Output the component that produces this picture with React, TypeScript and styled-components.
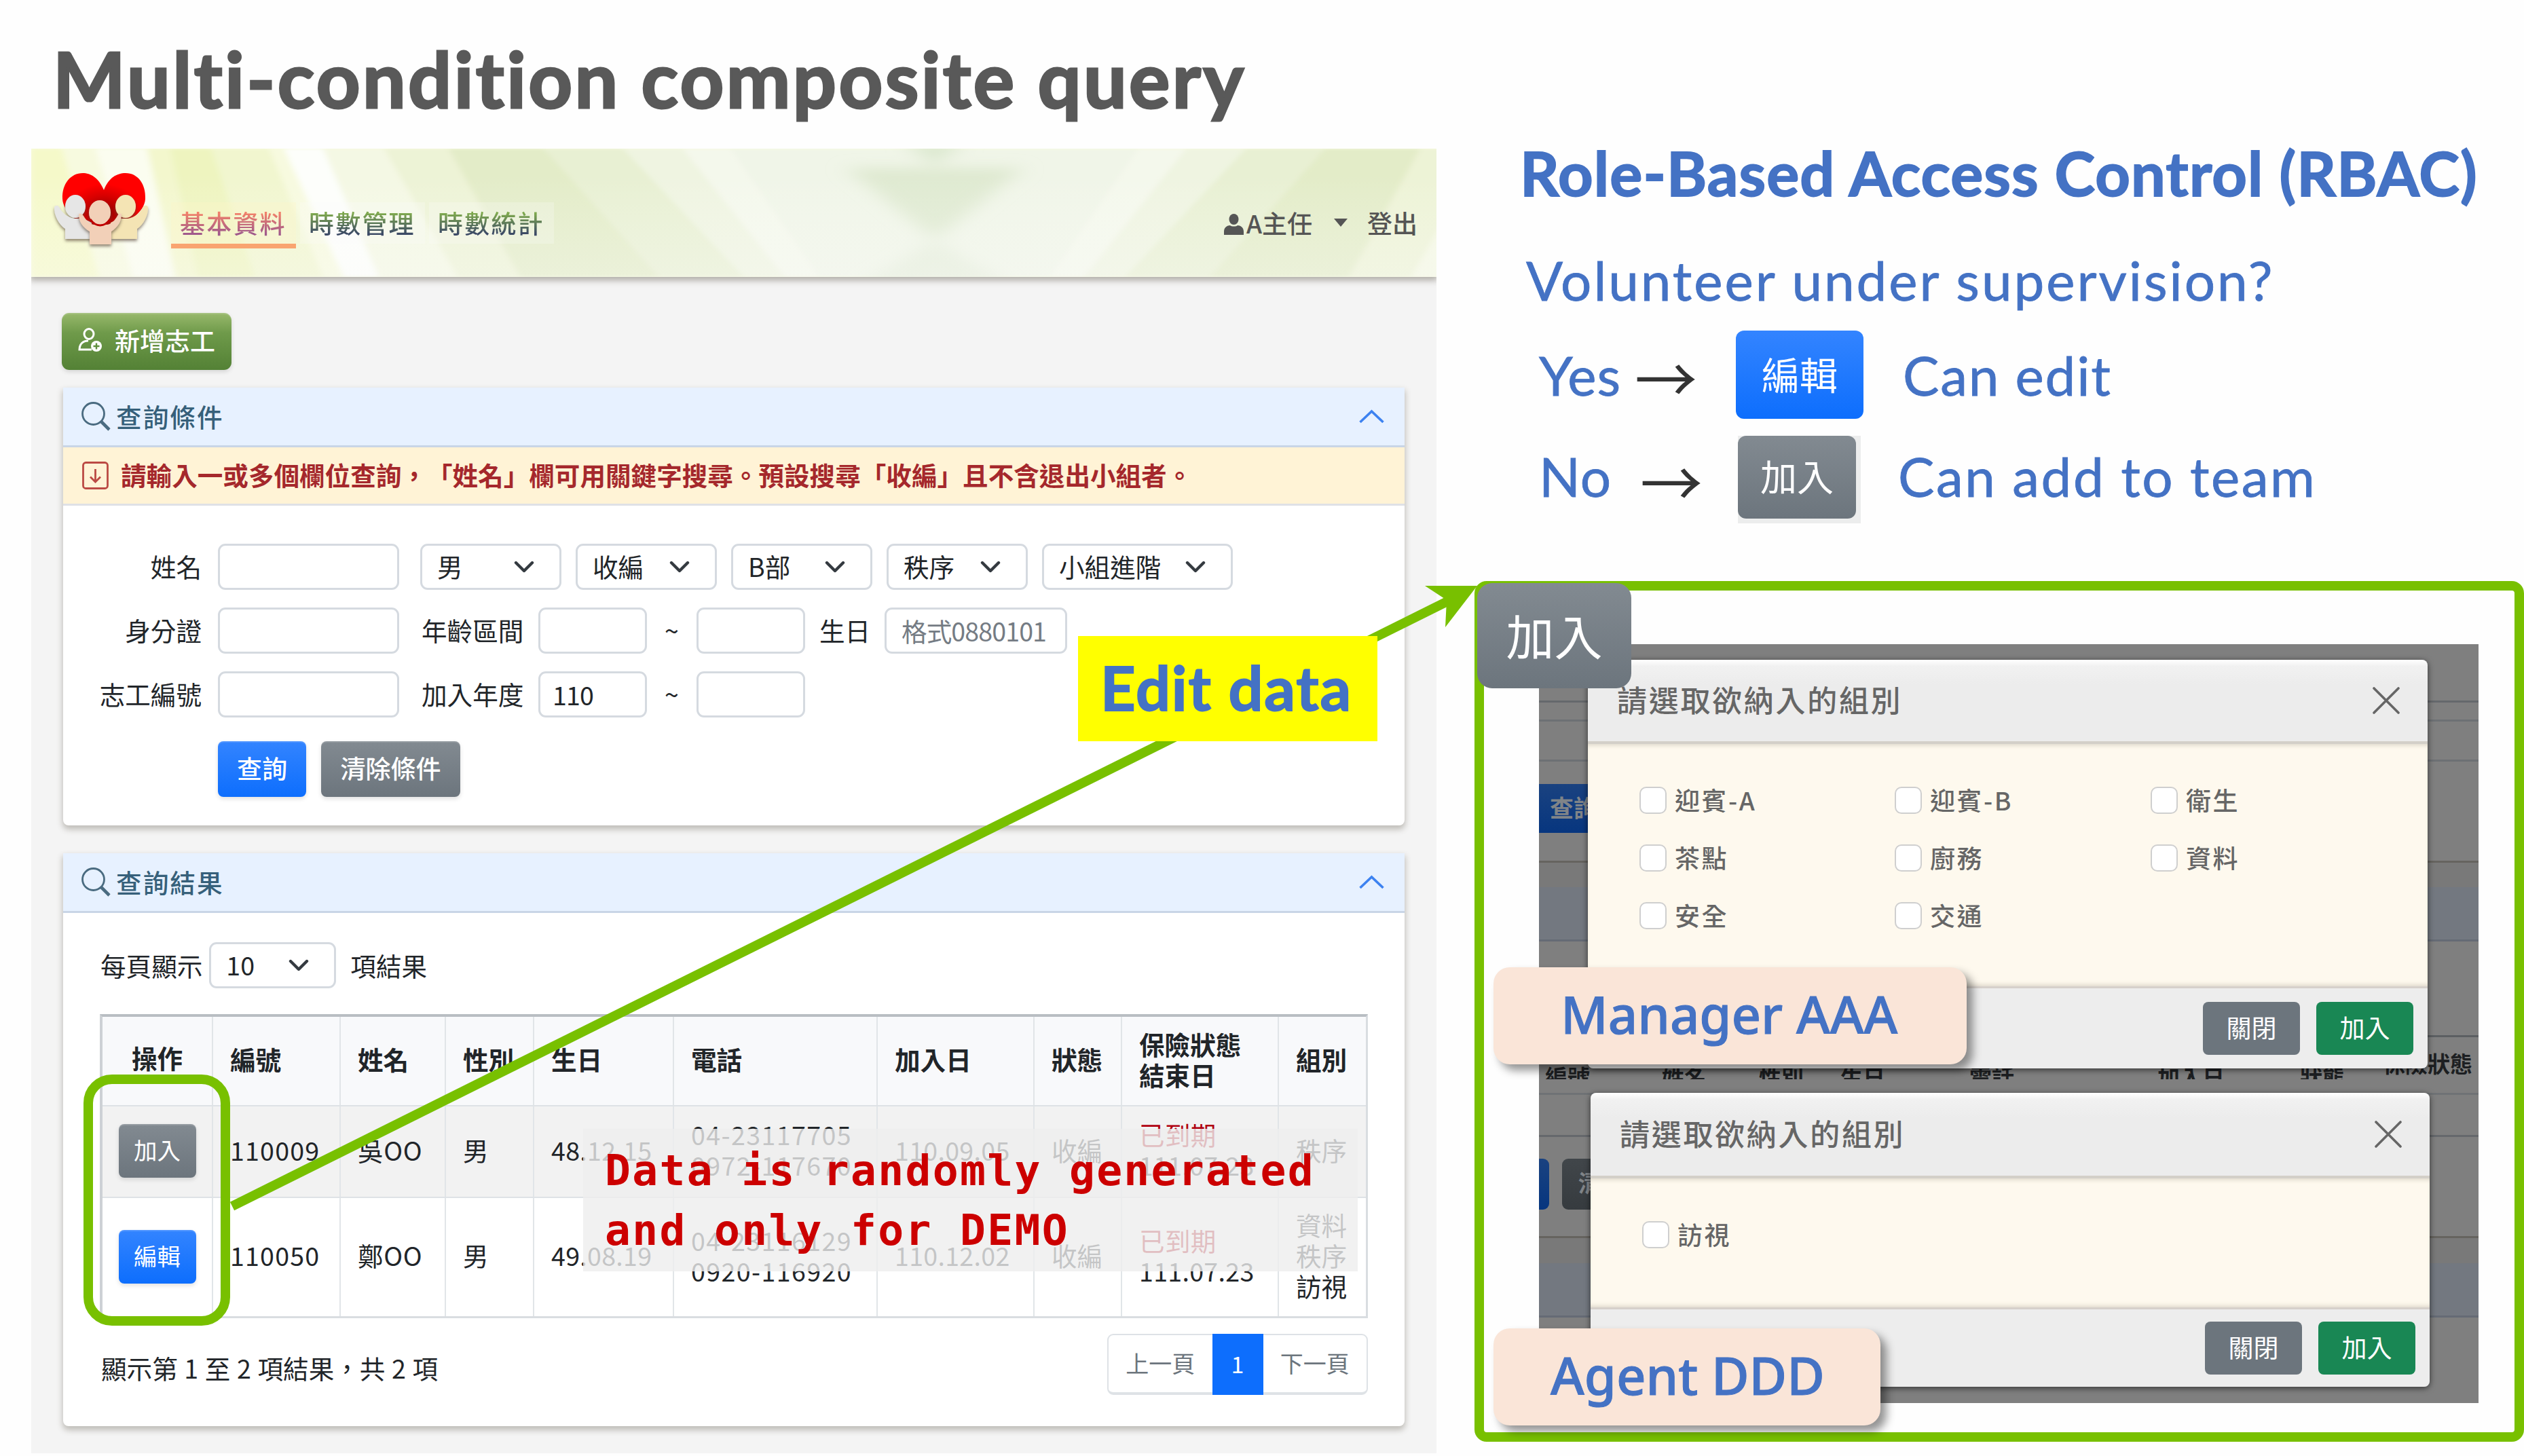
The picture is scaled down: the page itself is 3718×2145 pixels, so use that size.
import React from "react";
import styled, { createGlobalStyle, css } from "styled-components";

const CJK = `"Noto Sans CJK TC", "Noto Sans", sans-serif`;
const LATO = `Lato, "Open Sans", sans-serif`;
const GREEN = "#78c000";
const BLUE = "#4472c4";

const Global = createGlobalStyle`
  * { box-sizing: border-box; }
  body { margin: 0; background: #fff; font-family: ${CJK}; font-variant-ligatures: none; text-spacing-trim: space-all; }
`;

const Slide = styled.main`
  position: relative;
  width: 3718px;
  height: 2145px;
  overflow: hidden;
  background: #fefefe;
  display: flex;
`;
const LeftColumn = styled.section`
  width: 2116px;
  padding-left: 46px;
  flex: none;
`;
const RightColumn = styled.section`
  flex: 1;
  padding-left: 56px;
`;
const Title = styled.h1`
  margin: 0;
  height: 219px;
  padding: 50px 0 0 32px;
  font: 700 113px/130px ${LATO};
  font-variant-ligatures: none;
  letter-spacing: 3.4px;
  -webkit-text-stroke: 3px #595959;
  color: #595959;
  white-space: nowrap;
`;

/* ---------- application window ---------- */
const AppWindow = styled.div`
  width: 2070px;
  height: 1922px;
  background: #f4f4f4;
  font-size: 37.6px;
  color: #212529;
`;
const TopBar = styled.header`
  position: relative;
  height: 189px;
  display: flex;
  align-items: flex-start;
  box-shadow: 0 3px 9px 2px rgba(90, 85, 70, 0.45);
  clip-path: inset(0 0 -20px 0);
`;
const Backdrop = styled.svg`
  position: absolute;
  inset: 0;
  width: 100%;
  height: 100%;
`;
const LogoBox = styled.div`
  position: relative;
  width: 140px;
  margin: 36px 33px 0 33px;
  svg { display: block; overflow: visible; }
`;
const Nav = styled.nav`
  position: relative;
  display: flex;
  gap: 6px;
  margin-top: 79px;
`;
const NavItem = styled.a<{ $active?: boolean }>`
  height: 68px;
  width: 184px;
  padding-left: 13px;
  background: ${(p) => (p.$active ? "rgba(255,245,200,.3)" : "rgba(250,250,250,.25)")};
  border-bottom: 7px solid ${(p) => (p.$active ? "#f9a470" : "transparent")};
  background-clip: padding-box;
  span {
    font-size: 37px;
    line-height: 61px;
    font-weight: 500;
    letter-spacing: 2.2px;
    color: transparent;
    background: ${(p) =>
      p.$active
        ? "linear-gradient(#f0806a 25%, #a05a8c 80%)"
        : "linear-gradient(#7ea84e 25%, #3c4a66 80%)"};
    background-clip: text;
    white-space: nowrap;
  }
`;
const Account = styled.div`
  position: relative;
  margin: 81px 28px 0 auto;
  height: 61px;
  display: flex;
  align-items: center;
  font-size: 37px;
  font-weight: 500;
  line-height: 57px;
  color: #555;
  svg { display: block; flex: none; }
`;
const AccountText = styled.span`
  margin: -4px 0 0 4px;
`;
const Caret = styled.i`
  border: 10px solid transparent;
  border-top: 12px solid #555;
  border-bottom: 0;
  margin: -5px 25px 0 32px;
`;
const Content = styled.div`
  padding: 53px 47px 0;
  display: flex;
  flex-direction: column;
  align-items: flex-start;
`;

type Tone = "olive" | "blue" | "gray" | "green" | "slate";
const tones: Record<Tone, string> = {
  olive: "linear-gradient(#98b96c, #6f9a4a 35%, #538135)",
  blue: "linear-gradient(#3384ff, #0d6efd)",
  gray: "linear-gradient(#828a91, #6c757d)",
  green: "#198754",
  slate: "#6c757d",
};
const Button = styled.button<{
  $tone: Tone; $w: number; $h: number; $size?: number; $radius?: number; $weight?: number; $flat?: boolean; $ml?: number;
}>`
  width: ${(p) => p.$w}px;
  height: ${(p) => p.$h}px;
  margin: 0 0 0 ${(p) => p.$ml ?? 0}px;
  flex: none;
  padding: 0 0 4px;
  border: 0;
  border-radius: ${(p) => p.$radius ?? 8}px;
  background: ${(p) => tones[p.$tone]};
  color: #fff;
  font: ${(p) => p.$weight ?? 500} ${(p) => p.$size ?? 37}px/1 ${CJK};
  white-space: nowrap;
  display: flex;
  align-items: center;
  justify-content: center;
  gap: 18px;
  ${(p) => !p.$flat && css`box-shadow: inset 0 2px 1px rgba(255,255,255,.15), 0 3px 6px rgba(0,0,0,.12);`}
`;

const Card = styled.section<{ $h: number; $mt: number }>`
  width: 1976px;
  height: ${(p) => p.$h}px;
  margin-top: ${(p) => p.$mt}px;
  background: #fff;
  border-radius: 0 0 8px 8px;
  box-shadow: 0 5px 8px 1px rgba(80, 75, 60, 0.32);
`;
const CardHeader = styled.div`
  height: 88px;
  padding: 0 30px 0 26px;
  background: #e7f1ff;
  border-bottom: 3px solid #c9d5e6;
  display: flex;
  align-items: center;
  color: #36607a;
  font-weight: 500;
  letter-spacing: 2.1px;
  svg { display: block; }
`;
const CardTitle = styled.span`
  margin: -3px auto 0 8px;
`;
const Notice = styled.div`
  height: 86px;
  padding-left: 28px;
  background: #fff3d6;
  border-bottom: 3px solid #dfe1e6;
  display: flex;
  align-items: center;
  gap: 18px;
  color: #a5282c;
  font-weight: 600;
  white-space: nowrap;
  span { margin-top: -4px; }
  svg { display: block; flex: none; }
`;
const Form = styled.form`
  padding-top: 56px;
  display: flex;
  flex-direction: column;
  gap: 26px;
`;
const FormRow = styled.div`
  display: flex;
  align-items: center;
  height: 68px;
`;
const ActionRow = styled.div`
  display: flex;
  gap: 22px;
  padding: 9px 0 0 228px;
`;
const FieldLabel = styled.label<{ $w?: number; $ml?: number; $center?: boolean }>`
  width: ${(p) => p.$w ?? 204}px;
  margin-left: ${(p) => p.$ml ?? 0}px;
  text-align: ${(p) => (p.$center ? "center" : "right")};
  line-height: 60px;
  margin-top: -3px;
  white-space: nowrap;
`;
const fieldBox = css`
  border: 3px solid #d5dae0;
  border-radius: 11px;
  background: #fff;
  height: 68px;
  flex: none;
  display: flex;
  align-items: center;
  white-space: nowrap;
`;
const Field = styled.div<{ $w: number; $ml: number; $muted?: boolean }>`
  ${fieldBox}
  width: ${(p) => p.$w}px;
  margin-left: ${(p) => p.$ml}px;
  padding: 0 0 2px ${(p) => (p.$muted ? 22 : 18)}px;
  color: ${(p) => (p.$muted ? "#757c84" : "#212529")};
  letter-spacing: -0.9px;
`;
const SelectBox = styled.div<{ $w: number; $ml: number }>`
  ${fieldBox}
  width: ${(p) => p.$w}px;
  margin-left: ${(p) => p.$ml}px;
  padding: 0 37px 0 22px;
  justify-content: space-between;
  span { margin-top: -4px; }
`;

/* ---------- results ---------- */
const LengthRow = styled.div`
  display: flex;
  align-items: center;
  margin: 43px 0 38px 55px;
  height: 68px;
  > span { margin-top: -2px; }
`;
const LengthSuffix = styled.span`
  margin-left: 21px;
`;
const Table = styled.div`
  margin-left: 54px;
  width: 1868px;
  border: solid #d9dde1;
  border-width: 4px 3px 3px 4px;
  border-top-color: #b9bec3;
  border-left-color: #cdd1d5;
`;
const TableRow = styled.div<{ $h: number; $bg: string; $bold?: boolean }>`
  display: grid;
  grid-template-columns: 163px 188px 155px 130px 206px 300px 231px 129px 231px 1fr;
  height: ${(p) => p.$h}px;
  background: ${(p) => p.$bg};
  font-weight: ${(p) => (p.$bold ? 700 : 400)};
  & + & { border-top: 2px solid #dee2e6; }
`;
const Cell = styled.div<{ $center?: boolean; $ls?: number; $pb?: number }>`
  border-right: 2px solid #e1e5e8;
  padding: 0 0 ${(p) => p.$pb ?? 7}px ${(p) => (p.$center ? 0 : 25)}px;
  display: flex;
  flex-direction: column;
  justify-content: center;
  align-items: ${(p) => (p.$center ? "center" : "flex-start")};
  letter-spacing: ${(p) => p.$ls ?? 0}px;
  line-height: 45px;
  white-space: nowrap;
  &:last-child { border-right: 0; }
`;
const Expired = styled.span`
  color: #b00010;
`;
const TableFooter = styled.div`
  display: flex;
  align-items: center;
  justify-content: space-between;
  margin: 23px 54px 0 56px;
  height: 90px;
  > span { margin-top: 9px; word-spacing: 1.2px; }
`;
const Pager = styled.div`
  display: flex;
  width: 384px;
  height: 90px;
  border: 2px solid #dee2e6;
  border-bottom-width: 4px;
  border-radius: 9px;
  font-size: 34px;
  color: #6c757d;
`;
const PageLink = styled.span<{ $active?: boolean }>`
  flex: ${(p) => (p.$active ? "0 0 75px" : 1)};
  display: flex;
  align-items: center;
  justify-content: center;
  padding-bottom: 3px;
  margin: ${(p) => (p.$active ? "-2px 0 -4px" : 0)};
  background: ${(p) => (p.$active ? "#0d6efd" : "transparent")};
  color: ${(p) => (p.$active ? "#fff" : "inherit")};
`;

/* ---------- role notes ---------- */
const RoleTitle = styled.h2`
  margin: 0;
  padding: 202px 0 0 67px;
  font: 700 90px/104px ${LATO};
  font-variant-ligatures: none;
  -webkit-text-stroke: 1.8px ${BLUE};
  color: ${BLUE};
  white-space: nowrap;
  letter-spacing: 1.1px;
`;
const Question = styled.p`
  margin: 54px 0 0;
  padding-left: 76px;
  font: 400 80px/104px ${LATO};
  -webkit-text-stroke: 0.8px ${BLUE};
  color: ${BLUE};
  white-space: nowrap;
  letter-spacing: 2.95px;
`;
const RoleLine = styled.div<{ $mt: number; $h: number; $pl: number; $rise: number }>`
  display: flex;
  align-items: center;
  margin-top: ${(p) => p.$mt}px;
  height: ${(p) => p.$h}px;
  padding-left: ${(p) => p.$pl}px;
  font: 400 80px/104px ${LATO};
  color: ${BLUE};
  white-space: nowrap;
  > [data-copy] {
    -webkit-text-stroke: 0.8px ${BLUE};
    margin-top: ${(p) => -p.$rise}px;
  }
`;
const Answer = styled.span<{ $w: number }>`
  width: ${(p) => p.$w}px;
  letter-spacing: 1px;
`;
const ArrowGlyph = styled.span<{ $mr: number; $mt: number }>`
  font: 400 92px/104px ${CJK};
  color: #333;
  width: 92px;
  margin: ${(p) => p.$mt}px ${(p) => p.$mr}px 0 0;
`;
const ButtonShade = styled.div`
  background: #eceded;
  padding: 0 7px 7px 0;
`;
const Outcome = styled.span<{ $ml: number; $ls: number }>`
  margin-left: ${(p) => p.$ml}px;
  letter-spacing: ${(p) => p.$ls}px;
`;

/* ---------- dialog frame ---------- */
const Frame = styled.div`
  position: absolute;
  left: 2172px;
  top: 856px;
  width: 1546px;
  height: 1268px;
  border: 14px solid ${GREEN};
  border-radius: 18px;
  background: #fefefe;
  padding: 79px 0 0 81px;
`;
const CornerButton = styled.div`
  position: absolute;
  left: -10px;
  top: -11px;
  z-index: 2;
`;
const DimShot = styled.div<{ $h: number; $pt: number; $pl: number }>`
  position: relative;
  width: 1384px;
  height: ${(p) => p.$h}px;
  padding: ${(p) => p.$pt}px 0 0 ${(p) => p.$pl}px;
  overflow: hidden;
  background: #7f7f7f;
`;
const DimPage = styled.div`
  position: absolute;
  inset: 0;
  display: flex;
  flex-direction: column;
`;
const DimBand = styled.div<{ $h: number; $bg?: string; $line?: string }>`
  flex: none;
  height: ${(p) => p.$h}px;
  background: ${(p) => p.$bg ?? "#7f7f7f"};
  border-bottom: ${(p) => (p.$line ? `3px solid ${p.$line}` : "0")};
  display: flex;
  gap: 19px;
`;
const DimButton = styled.div<{ $w: number; $bg: string; $round?: string; $pl?: number }>`
  width: ${(p) => p.$w}px;
  flex: none;
  height: 100%;
  padding-left: ${(p) => p.$pl ?? 0}px;
  background: ${(p) => p.$bg};
  border-radius: ${(p) => p.$round ?? 0};
  font: 700 35px/68px ${CJK};
  color: #808488;
  white-space: nowrap;
  overflow: hidden;
`;
const DimHeads = styled.div`
  display: grid;
  grid-template-columns: 172px 143px 120px 190px 277px 210px 122px 1fr;
  padding-left: 9px;
  font: 700 33px/40px ${CJK};
  color: #1d1f22;
  white-space: nowrap;
  align-items: center;
  height: 116px;
  flex: none;
`;
const Dialog = styled.div<{ $w: number }>`
  position: relative;
  width: ${(p) => p.$w}px;
  border-radius: 8px;
  overflow: hidden;
  box-shadow: 0 2px 10px rgba(0, 0, 0, 0.6);
`;
const DialogHead = styled.div<{ $h: number }>`
  height: ${(p) => p.$h}px;
  padding: 0 41px 0 43px;
  display: flex;
  justify-content: space-between;
  align-items: center;
  background: linear-gradient(#fff, #f1f1f1 8%, #ececec 30%);
  border-bottom: 4px solid #d3cfc8;
  font-size: 44px;
  font-weight: 500;
  letter-spacing: 2.7px;
  color: #666;
  span { margin-top: -4px; }
  svg { display: block; }
`;
const DialogBody = styled.div<{ $h: number }>`
  height: ${(p) => p.$h}px;
  padding: 63px 0 0 76px;
  background: #fef9ee;
  box-shadow: inset 0 6px 6px -4px rgba(120, 110, 90, 0.25), inset 0 -6px 6px -4px rgba(120, 110, 90, 0.25);
  display: grid;
  grid-template-columns: 376px 377px 1fr;
  grid-auto-rows: 85px;
`;
const DialogFoot = styled.div<{ $h: number }>`
  height: ${(p) => p.$h}px;
  padding: 0 21px 0 0;
  background: #ededed;
  border-top: 3px solid #d6d0cb;
  display: flex;
  justify-content: flex-end;
  align-items: center;
  gap: 24px;
`;
const Option = styled.label`
  display: flex;
  height: 40px;
  align-items: center;
  gap: 12px;
  font-size: 37px;
  font-weight: 500;
  letter-spacing: 2.5px;
  color: #666;
  white-space: nowrap;
  span { margin-top: -2px; }
`;
const Box = styled.i`
  width: 40px;
  height: 40px;
  border: 2px solid #cfcfcf;
  border-radius: 10px;
  background: #fff;
`;
const RoleTag = styled.div<{ $top: number; $w: number; $pl: number }>`
  position: absolute;
  left: 2200px;
  top: ${(p) => p.$top}px;
  width: ${(p) => p.$w}px;
  height: 143px;
  padding-left: ${(p) => p.$pl}px;
  border-radius: 24px;
  background: #fae5d8;
  box-shadow: 9px 9px 13px rgba(0, 0, 0, 0.42);
  font: 500 76px/138px "Noto Sans", "Open Sans", sans-serif;
  -webkit-text-stroke: 1px ${BLUE};
  color: ${BLUE};
  white-space: nowrap;
`;

/* ---------- annotations ---------- */
const DemoNote = styled.div`
  position: absolute;
  left: 859px;
  top: 1663px;
  width: 1141px;
  height: 210px;
  padding: 18px 0 0 32px;
  background: rgba(238, 238, 238, 0.8);
  font: 700 63px/88px "DejaVu Sans Mono", monospace;
  letter-spacing: 2.3px;
  color: #cc0000;
  white-space: pre;
`;
const Highlight = styled.div`
  position: absolute;
  left: 123px;
  top: 1583px;
  width: 216px;
  height: 370px;
  border: 14px solid ${GREEN};
  border-radius: 42px;
`;
const Connector = styled.svg`
  position: absolute;
  left: 0;
  top: 0;
`;
const EditTag = styled.div`
  position: absolute;
  left: 1588px;
  top: 937px;
  width: 441px;
  height: 155px;
  padding-left: 33px;
  background: #ffff00;
  font: 700 90px/150px ${LATO};
  letter-spacing: 1.8px;
  -webkit-text-stroke: 1.8px ${BLUE};
  color: ${BLUE};
  white-space: nowrap;
`;

/* ---------- drawings ---------- */
const HalfStreaks = () => (
  <g>
    <polygon points="0,0 45,0 100,189 0,189" fill="#f5f9c9" />
    <polygon points="95,0 170,0 215,189 150,189" fill="#fbfdf0" />
    <polygon points="172,0 205,0 300,189 212,189" fill="#f3f7cd" />
    <polygon points="205,0 320,0 392,189 245,189" fill="#eef4bf" />
    <polygon points="265,0 350,0 430,189 330,189" fill="#f1f6cf" />
    <polygon points="372,0 430,0 512,189 460,189" fill="#fdfefb" />
    <polygon points="430,0 520,0 628,189 512,189" fill="#f4f8e4" />
    <polygon points="520,0 615,0 770,189 628,189" fill="#edf3d6" />
    <polygon points="615,0 755,0 925,189 720,189" fill="#e3ecc8" />
    <polygon points="755,0 872,0 1050,189 925,189" fill="#e8f0d3" />
    <polygon points="872,0 960,0 1110,189 1050,189" fill="#eff4e1" />
    <polygon points="960,0 1030,0 1160,189 1110,189" fill="#f4f8ec" />
    <polygon points="1030,0 1331,0 1331,189 1160,189" fill="#f0f5e8" />
  </g>
);
const Streaks = () => (
  <Backdrop viewBox="0 0 2070 189" preserveAspectRatio="none">
    <defs>
      <filter id="soft" x="-5%" y="-20%" width="110%" height="140%">
        <feGaussianBlur stdDeviation="5 2" />
      </filter>
      <filter id="softer" x="-30%" y="-30%" width="160%" height="160%">
        <feGaussianBlur stdDeviation="16 9" />
      </filter>
      <linearGradient id="mist" x1="0" y1="0" x2="0" y2="1">
        <stop offset="0.2" stopColor="#fff" stopOpacity="0" />
        <stop offset="1" stopColor="#fafafa" stopOpacity="0.35" />
      </linearGradient>
    </defs>
    <rect width="2070" height="189" fill="#f7fadf" />
    <g filter="url(#soft)">
      <HalfStreaks />
      <g transform="translate(2661 0) scale(-1 1)">
        <HalfStreaks />
      </g>
    </g>
    <g filter="url(#softer)">
      <polygon points="1285,-10 1376,-10 1331,24" fill="#d3e3c4" opacity="0.7" />
      <polygon points="1200,28 1462,28 1331,135" fill="#d9e6ca" opacity="0.75" />
      <polygon points="1331,135 1440,200 1222,200" fill="#dfead3" opacity="0.6" />
    </g>
    <rect width="2070" height="189" fill="url(#mist)" />
  </Backdrop>
);
const Logo = () => (
  <svg width="140" height="112" viewBox="0 0 140 112">
    <defs>
      <radialGradient id="heart" cx="0.5" cy="0.62" r="0.6">
        <stop offset="0" stopColor="#8c0000" />
        <stop offset="0.45" stopColor="#d80000" />
        <stop offset="0.75" stopColor="#ff0000" />
      </radialGradient>
      <filter id="drop" x="-20%" y="-20%" width="140%" height="150%">
        <feDropShadow dx="0" dy="3" stdDeviation="2" floodColor="#5a4a3a" floodOpacity="0.65" />
      </filter>
    </defs>
    <path d="M74 25C66 6 54 0 43 0 25 0 12 16 13 38c1 20 25 36 60 56 36-20 61-36 62-56C136 16 124 0 106 0 93 0 81 7 74 25z" fill="url(#heart)" />
    <g filter="url(#drop)">
      <g fill="#e6e6e6">
        <path d="M1 50c2-3 5-3 7 0 5 9 12 15 22 17h14l12 6v24H17V82C8 76 0 62 1 50z" />
        <ellipse cx="32" cy="49" rx="15" ry="17" />
      </g>
      <g fill="#f4e4b4">
        <path d="M139 50c-2-3-5-3-7 0-5 9-12 15-22 17H96l-12 6v24h39V82c9-6 17-20 16-32z" />
        <ellipse cx="106" cy="49" rx="15" ry="17" />
      </g>
    </g>
    <g filter="url(#drop)" fill="#f2d0b8">
      <path d="M37 60c3-1 5 0 7 3 4 7 9 12 15 13h20c6-1 11-6 15-13 1-3 4-4 6-3 0 12-6 20-15 26v19H53V86c-10-6-16-14-16-26z" />
      <ellipse cx="68" cy="58" rx="16" ry="18" />
    </g>
    <path d="M54 68c8 12 21 12 29 0" fill="none" stroke="#c00000" strokeWidth="3" />
  </svg>
);
const PersonIcon = () => (
  <svg width="29" height="31" viewBox="0 0 29 31" fill="#555">
    <ellipse cx="14.5" cy="8" rx="7" ry="8" />
    <path d="M0 31v-5c0-6 5-9 9-9 2 2 9 2 11 0 4 0 9 3 9 9v5z" />
  </svg>
);
const AddPersonIcon = () => (
  <svg width="36" height="36" viewBox="0 0 36 36" fill="none" stroke="#fff" strokeWidth="3">
    <ellipse cx="16" cy="9" rx="7" ry="7.5" />
    <path d="M20 32H2c0-8 5-13 13-13" />
    <circle cx="27" cy="27" r="8" fill="#fff" stroke="none" />
    <path d="M27 22.5v9M22.5 27h9" stroke="#5f8f3e" strokeWidth="2.4" />
  </svg>
);
const SearchIcon = () => (
  <svg width="44" height="43" viewBox="0 0 44 43" fill="none" stroke="#4a6b80" strokeWidth="2.8">
    <circle cx="18.5" cy="17.5" r="16" />
    <path d="M30 29l12 12" strokeWidth="4.6" />
  </svg>
);
const ChevronUp = () => (
  <svg width="37" height="21" viewBox="0 0 37 21" fill="none" stroke="#3d82f0" strokeWidth="3.6">
    <path d="M1.5 19L18.5 3l17 16" />
  </svg>
);
const ChevronDown = () => (
  <svg width="30" height="18" viewBox="0 0 30 18" fill="none" stroke="#343a40" strokeWidth="4.4" strokeLinecap="round" strokeLinejoin="round">
    <path d="M3 3l12 12L27 3" />
  </svg>
);
const NoticeIcon = () => (
  <svg width="39" height="41" viewBox="0 0 39 41" fill="none" stroke="#bb4a44" strokeWidth="2.8">
    <rect x="1.5" y="1.5" width="36" height="38" rx="4" />
    <path d="M19.5 11v18M12 22.5l7.5 7.5 7.5-7.5" />
  </svg>
);
const CloseIcon = () => (
  <svg width="40" height="40" viewBox="0 0 40 40" stroke="#666" strokeWidth="3.6" strokeLinecap="round">
    <path d="M2 2l36 36M38 2L2 38" />
  </svg>
);

const Select = ({ w, ml, children }: { w: number; ml: number; children: React.ReactNode }) => (
  <SelectBox $w={w} $ml={ml}>
    <span>{children}</span>
    <ChevronDown />
  </SelectBox>
);

const heads = [["操作"], ["編號"], ["姓名"], ["性別"], ["生日"], ["電話"], ["加入日"], ["狀態"], ["保險狀態", "結束日"], ["組別"]];
type Member = { joined: boolean; id: string; name: string; born: string; phones: string[]; since: string; groups: string[] };
const members: Member[] = [
  { joined: false, id: "110009", name: "吳OO", born: "48.12.15", phones: ["04-23117705", "0972-117670"], since: "110.09.05", groups: ["秩序"] },
  { joined: true, id: "110050", name: "鄭OO", born: "49.08.19", phones: ["04-23116129", "0920-116920"], since: "110.12.02", groups: ["資料", "秩序", "訪視"] },
];
const Lines = ({ items }: { items: string[] }) => (
  <>
    {items.map((t) => (
      <span key={t}>{t}</span>
    ))}
  </>
);

type PickerProps = { w: number; head: number; body: number; foot: number; options: string[] };
const GroupPicker = ({ w, head, body, foot, options }: PickerProps) => (
  <Dialog $w={w}>
    <DialogHead $h={head}>
      <span>請選取欲納入的組別</span>
      <CloseIcon />
    </DialogHead>
    <DialogBody $h={body}>
      {options.map((o) => (
        <Option key={o}>
          <Box />
          <span>{o}</span>
        </Option>
      ))}
    </DialogBody>
    <DialogFoot $h={foot}>
      <Button $tone="slate" $w={143} $h={78} $size={37} $weight={400} $flat>關閉</Button>
      <Button $tone="green" $w={143} $h={78} $size={37} $weight={400} $flat>加入</Button>
    </DialogFoot>
  </Dialog>
);

export default function App() {
  return (
    <Slide>
      <Global />
      <LeftColumn>
        <Title>Multi-condition composite query</Title>
        <AppWindow>
          <TopBar>
            <Streaks />
            <LogoBox><Logo /></LogoBox>
            <Nav>
              <NavItem $active><span>基本資料</span></NavItem>
              <NavItem><span>時數管理</span></NavItem>
              <NavItem><span>時數統計</span></NavItem>
            </Nav>
            <Account>
              <PersonIcon />
              <AccountText>A主任</AccountText>
              <Caret />
              <AccountText>登出</AccountText>
            </Account>
          </TopBar>
          <Content>
            <Button $tone="olive" $w={250} $h={84} $radius={11} $ml={-2}>
              <AddPersonIcon />
              新增志工
            </Button>
            <Card $h={645} $mt={26}>
              <CardHeader>
                <SearchIcon />
                <CardTitle>查詢條件</CardTitle>
                <ChevronUp />
              </CardHeader>
              <Notice>
                <NoticeIcon />
                <span>請輸入一或多個欄位查詢，「姓名」欄可用關鍵字搜尋。預設搜尋「收編」且不含退出小組者。</span>
              </Notice>
              <Form>
                <FormRow>
                  <FieldLabel>姓名</FieldLabel>
                  <Field $w={267} $ml={24} />
                  <Select w={208} ml={31}>男</Select>
                  <Select w={208} ml={21}>收編</Select>
                  <Select w={208} ml={21}>B部</Select>
                  <Select w={208} ml={21}>秩序</Select>
                  <Select w={281} ml={21}>小組進階</Select>
                </FormRow>
                <FormRow>
                  <FieldLabel>身分證</FieldLabel>
                  <Field $w={267} $ml={24} />
                  <FieldLabel $w={150} $ml={33}>年齡區間</FieldLabel>
                  <Field $w={160} $ml={22} />
                  <FieldLabel $w={73} $center>~</FieldLabel>
                  <Field $w={160} $ml={0} />
                  <FieldLabel $w={75} $ml={21}>生日</FieldLabel>
                  <Field $w={269} $ml={21} $muted>格式0880101</Field>
                </FormRow>
                <FormRow>
                  <FieldLabel>志工編號</FieldLabel>
                  <Field $w={267} $ml={24} />
                  <FieldLabel $w={150} $ml={33}>加入年度</FieldLabel>
                  <Field $w={160} $ml={22}>110</Field>
                  <FieldLabel $w={73} $center>~</FieldLabel>
                  <Field $w={160} $ml={0} />
                </FormRow>
                <ActionRow>
                  <Button type="button" $tone="blue" $w={130} $h={82}>查詢</Button>
                  <Button type="button" $tone="gray" $w={205} $h={82}>清除條件</Button>
                </ActionRow>
              </Form>
            </Card>
            <Card $h={844} $mt={41}>
              <CardHeader>
                <SearchIcon />
                <CardTitle>查詢結果</CardTitle>
                <ChevronUp />
              </CardHeader>
              <LengthRow>
                <span>每頁顯示</span>
                <Select w={187} ml={10}>10</Select>
                <LengthSuffix>項結果</LengthSuffix>
              </LengthRow>
              <Table>
                <TableRow $h={130} $bg="#f8f9fb" $bold>
                  {heads.map((h, i) => (
                    <Cell key={h[0]} $center={i === 0} $pb={i === 0 ? 12 : 7}><Lines items={h} /></Cell>
                  ))}
                </TableRow>
                {members.map((m, i) => (
                  <TableRow key={m.id} $h={i ? 176 : 135} $bg={i ? "#fff" : "#f2f2f2"}>
                    <Cell $center $pb={2}>
                      <Button $tone={m.joined ? "blue" : "gray"} $w={114} $h={79} $size={34.5} $weight={400}>
                        {m.joined ? "編輯" : "加入"}
                      </Button>
                    </Cell>
                    <Cell $ls={1.2}>{m.id}</Cell>
                    <Cell $ls={0.6}>{m.name}</Cell>
                    <Cell>男</Cell>
                    <Cell $ls={0.3}>{m.born}</Cell>
                    <Cell $ls={1.4}><Lines items={m.phones} /></Cell>
                    <Cell $ls={0.3}>{m.since}</Cell>
                    <Cell>收編</Cell>
                    <Cell $ls={0.3}><Expired>已到期</Expired><span>111.07.23</span></Cell>
                    <Cell><Lines items={m.groups} /></Cell>
                  </TableRow>
                ))}
              </Table>
              <TableFooter>
                <span>顯示第 1 至 2 項結果，共 2 項</span>
                <Pager>
                  <PageLink>上一頁</PageLink>
                  <PageLink $active>1</PageLink>
                  <PageLink>下一頁</PageLink>
                </Pager>
              </TableFooter>
            </Card>
          </Content>
        </AppWindow>
      </LeftColumn>

      <RightColumn>
        <RoleTitle>Role-Based Access Control (RBAC)</RoleTitle>
        <Question>Volunteer under supervision?</Question>
        <RoleLine $mt={23} $h={130} $pl={95} $rise={0}>
          <Answer data-copy $w={141}>Yes</Answer>
          <ArrowGlyph $mr={57} $mt={4}>→</ArrowGlyph>
          <Button $tone="blue" $w={188} $h={130} $size={56} $radius={12} $weight={400} $flat>編輯</Button>
          <Outcome data-copy $ml={58} $ls={1.8}>Can edit</Outcome>
        </RoleLine>
        <RoleLine $mt={25} $h={129} $pl={95} $rise={12}>
          <Answer data-copy $w={149}>No</Answer>
          <ArrowGlyph $mr={52} $mt={0}>→</ArrowGlyph>
          <ButtonShade>
            <Button $tone="gray" $w={174} $h={122} $size={54} $radius={12} $weight={400} $flat>加入</Button>
          </ButtonShade>
          <Outcome data-copy $ml={55} $ls={2.5}>Can add to team</Outcome>
        </RoleLine>
      </RightColumn>

      <Frame>
        <CornerButton>
          <Button $tone="gray" $w={227} $h={155} $size={71} $radius={22} $weight={400} $flat>加入</Button>
        </CornerButton>
        <DimShot $h={641} $pt={23} $pl={72}>
          <DimPage>
            <DimBand $h={86} $line="#65686c" />
            <DimBand $h={28} $line="#6d7074" />
            <DimBand $h={59} $line="#6d7074" />
            <DimBand $h={33} />
            <DimBand $h={72}><DimButton $w={90} $pl={16} $bg="linear-gradient(#1a4280,#07367f)">查詢</DimButton></DimBand>
            <DimBand $h={44} $line="#66645f" />
            <DimBand $h={36} $bg="#797979" />
            <DimBand $h={80} $bg="#737880" $line="#656b75" />
            <DimBand $h={141} $line="#5c5f62" />
            <DimHeads>
              {heads.slice(1, 9).map((h) => (
                <div key={h[0]}><div>{h[0]}</div>{h[1] && <div>{h[1]}</div>}</div>
              ))}
            </DimHeads>
          </DimPage>
          <GroupPicker w={1237} head={124} body={357} foot={121}
            options={["迎賓-A", "迎賓-B", "衛生", "茶點", "廚務", "資料", "安全", "交通"]} />
        </DimShot>
        <DimShot $h={477} $pt={20} $pl={76}>
          <DimPage>
            <DimBand $h={23} $line="#6f7275" />
            <DimBand $h={62} $line="#65686c" />
            <DimBand $h={32} />
            <DimBand $h={75}>
              <DimButton $w={15} $bg="linear-gradient(#1a4280,#07367f)" $round="0 9px 9px 0" />
              <DimButton $w={100} $pl={24} $bg="linear-gradient(#41464a,#363b3f)" $round="9px">清除</DimButton>
            </DimBand>
            <DimBand $h={42} $line="#66645f" />
            <DimBand $h={37} $bg="#797979" />
            <DimBand $h={80} $bg="#737880" $line="#656b75" />
          </DimPage>
          <GroupPicker w={1236} head={126} body={190} foot={117} options={["訪視"]} />
        </DimShot>
      </Frame>
      <RoleTag $top={1425} $w={697} $pl={99}>Manager AAA</RoleTag>
      <RoleTag $top={1957} $w={570} $pl={84}>Agent DDD</RoleTag>

      <DemoNote>{"Data is randomly generated\nand only for DEMO"}</DemoNote>
      <Highlight />
      <Connector width="2200" height="2145" viewBox="0 0 2200 2145">
        <path d="M342 1777L2140 882" stroke={GREEN} strokeWidth="14" />
        <polygon points="2176,863 2099,863 2131,884 2129,924" fill={GREEN} />
      </Connector>
      <EditTag>Edit data</EditTag>
    </Slide>
  );
}
